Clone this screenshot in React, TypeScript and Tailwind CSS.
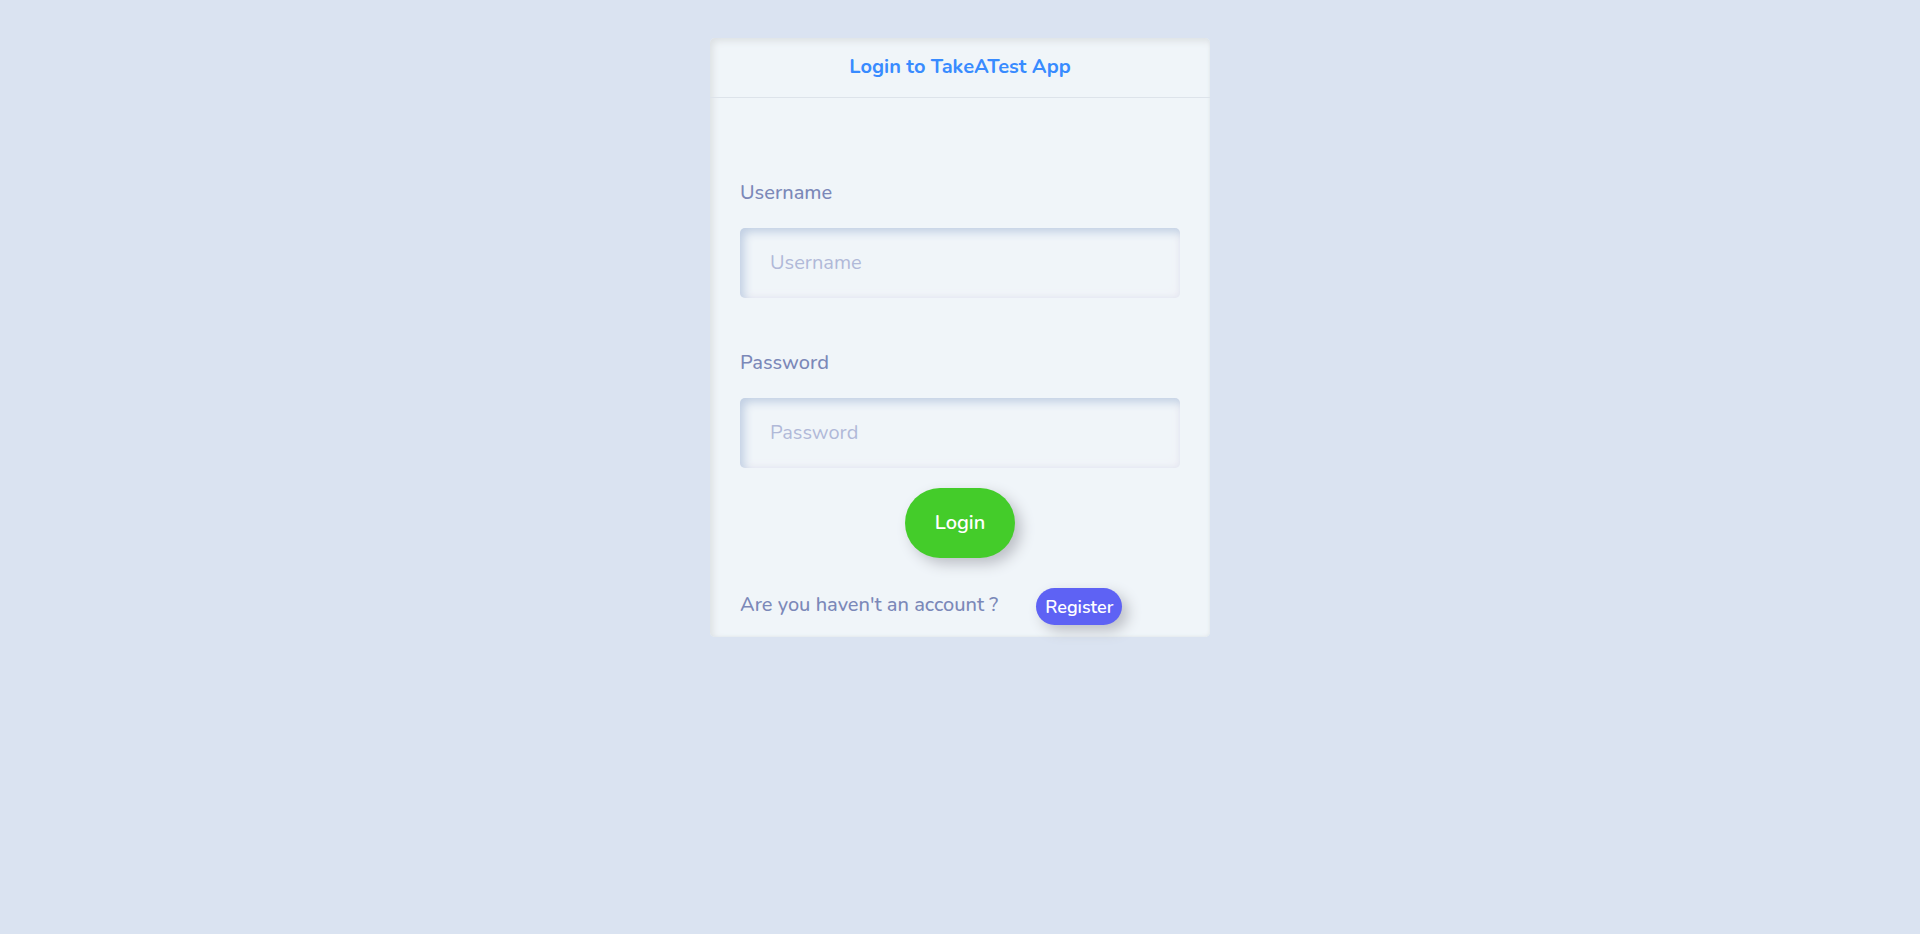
import { useId } from "react";

type FieldProps = { label: string; type: string; className?: string };

function Field({ label, type, className = "" }: FieldProps) {
  const id = useId();
  return (
    <div className={`flex flex-col gap-5 ${className}`}>
      <label htmlFor={id} className="leading-[30px] font-medium">
        {label}
      </label>
      <input
        id={id}
        type={type}
        placeholder={label}
        className="h-[70px] w-full rounded-[5px] bg-[#f0f5f9] px-[30px] pb-[2px] shadow-[inset_4px_4px_10px_#c0cfe3,inset_-2px_-2px_10px_#f0eff5] outline-none placeholder:text-[#b0b9d8]"
      />
    </div>
  );
}

export default function App() {
  return (
    <main className="min-h-screen bg-[#dae3f1] px-4 pt-[38px] font-['Nunito','Open_Sans',sans-serif] text-xl text-[#7b88b8]">
      <section className="mx-auto max-w-[500px] rounded-[5px] bg-[#f0f5f9] shadow-[inset_3px_3px_7px_#dce0e3,inset_-1px_-1px_2px_#e8eef2]">
        <h1 className="border-b border-[#dde3ea] pt-[14px] pb-[15px] text-center leading-[30px] font-bold text-[#388bff]">
          Login to TakeATest App
        </h1>
        <form className="px-[30px] pt-20 pb-3" onSubmit={(e) => e.preventDefault()}>
          <Field label="Username" type="text" />
          <Field label="Password" type="password" className="mt-[50px]" />
          <button
            type="submit"
            className="mx-auto mt-5 block h-[70px] rounded-[35px] bg-[#44cc2a] px-[30px] font-semibold text-white shadow-[6px_6px_14px_#bcbfc6]"
          >
            Login
          </button>
          <div className="mt-[30px] flex items-start gap-[38px]">
            <p className="leading-[34px] font-medium">Are you haven't an account ?</p>
            <button
              type="button"
              className="h-[37px] rounded-full bg-[#5e62f4] px-[9px] text-lg font-semibold text-white shadow-[6px_6px_14px_#bcbfc6]"
            >
              Register
            </button>
          </div>
        </form>
      </section>
    </main>
  );
}
